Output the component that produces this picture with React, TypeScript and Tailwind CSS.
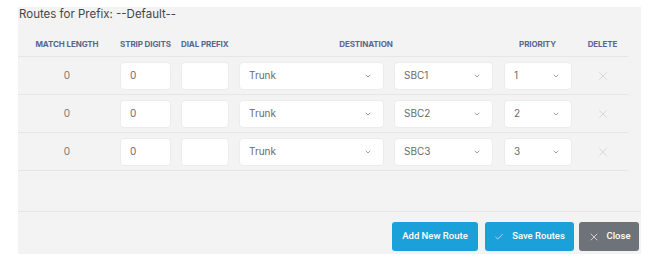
import { Check, ChevronDown, X } from "lucide-react"

const routes = [
  { match: "0", strip: "0", dest: "Trunk", sbc: "SBC1", priority: "1" },
  { match: "0", strip: "0", dest: "Trunk", sbc: "SBC2", priority: "2" },
  { match: "0", strip: "0", dest: "Trunk", sbc: "SBC3", priority: "3" },
]

function Select({ value, className }: { value: string; className: string }) {
  return (
    <div
      className={`h-[28px] bg-white rounded-[4px] border border-[#ececec] flex items-center justify-between pl-[9px] pr-[11px] text-[10px] text-[#6b6b6b] ${className}`}
    >
      <span>{value}</span>
      <ChevronDown className="w-[8px] h-[8px] text-[#8a8a8a]" strokeWidth={2.5} />
    </div>
  )
}

function Field({ value, className }: { value: string; className: string }) {
  return (
    <div
      className={`h-[28px] bg-white rounded-[4px] border border-[#ececec] flex items-center pl-[9px] text-[10px] text-[#6b6b6b] ${className}`}
    >
      {value}
    </div>
  )
}

export default function App() {
  return (
    <div className="w-[659px] h-[265px] bg-white pt-[7px] pl-[18px] font-['Inter',sans-serif]">
      <div className="w-[623px] bg-[#f3f3f3] pb-[3px]">
        <div className="h-[14px] leading-[14px] text-[11.5px] text-[#454545] pl-[1px]">
          Routes for Prefix: --Default--
        </div>

        <div className="w-[610px]">
          {/* header */}
          <div className="mt-[10px] h-[26px] flex items-center border-b border-[#e6e6e6] text-[8px] font-bold text-[#56678f] uppercase tracking-[-0.1px]">
            <div className="w-[98px] text-center">Match Length</div>
            <div className="w-[60px] pl-[4px]">Strip Digits</div>
            <div className="w-[58px] pl-[5px]">Dial Prefix</div>
            <div className="w-[264px] text-center">Destination</div>
            <div className="w-[79px] text-center">Priority</div>
            <div className="w-[51px] text-center">Delete</div>
          </div>

          {routes.map((r) => (
            <div key={r.sbc} className="h-[38px] flex items-center border-b border-[#e6e6e6]">
              <div className="w-[98px] text-center text-[10px] text-[#777]">{r.match}</div>
              <div className="w-[60px] pl-[4px]">
                <Field value={r.strip} className="w-[51px]" />
              </div>
              <div className="w-[58px] pl-[5px]">
                <Field value="" className="w-[48px]" />
              </div>
              <div className="w-[264px] pl-[5px] flex gap-[10px]">
                <Select value={r.dest} className="w-[145px]" />
                <Select value={r.sbc} className="w-[99px]" />
              </div>
              <div className="w-[79px] pl-[6px]">
                <Select value={r.priority} className="w-[68px]" />
              </div>
              <div className="w-[51px] flex justify-center">
                <X className="w-[14px] h-[14px] text-[#cdcdcd]" strokeWidth={1.2} />
              </div>
            </div>
          ))}
        </div>

        <div className="h-[41px] border-b border-[#e6e6e6]" />

        <div className="pt-[10px] pr-[2px] flex justify-end font-['Roboto',sans-serif] text-[9.5px] font-medium text-white">
          <button className="w-[86px] h-[29px] rounded-[3px] bg-[#1aa1d9] flex items-center justify-center">
            Add New Route
          </button>
          <button className="ml-[7px] w-[89px] h-[29px] rounded-[3px] bg-[#1aa1d9] flex items-center justify-center gap-[8px]">
            <Check className="w-[10px] h-[10px]" strokeWidth={1.5} />
            Save Routes
          </button>
          <button className="ml-[5px] w-[60px] h-[29px] rounded-[3px] bg-[#6d7378] flex items-center justify-center gap-[7px]">
            <X className="w-[12px] h-[12px]" strokeWidth={1.3} />
            Close
          </button>
        </div>
      </div>
    </div>
  )
}
